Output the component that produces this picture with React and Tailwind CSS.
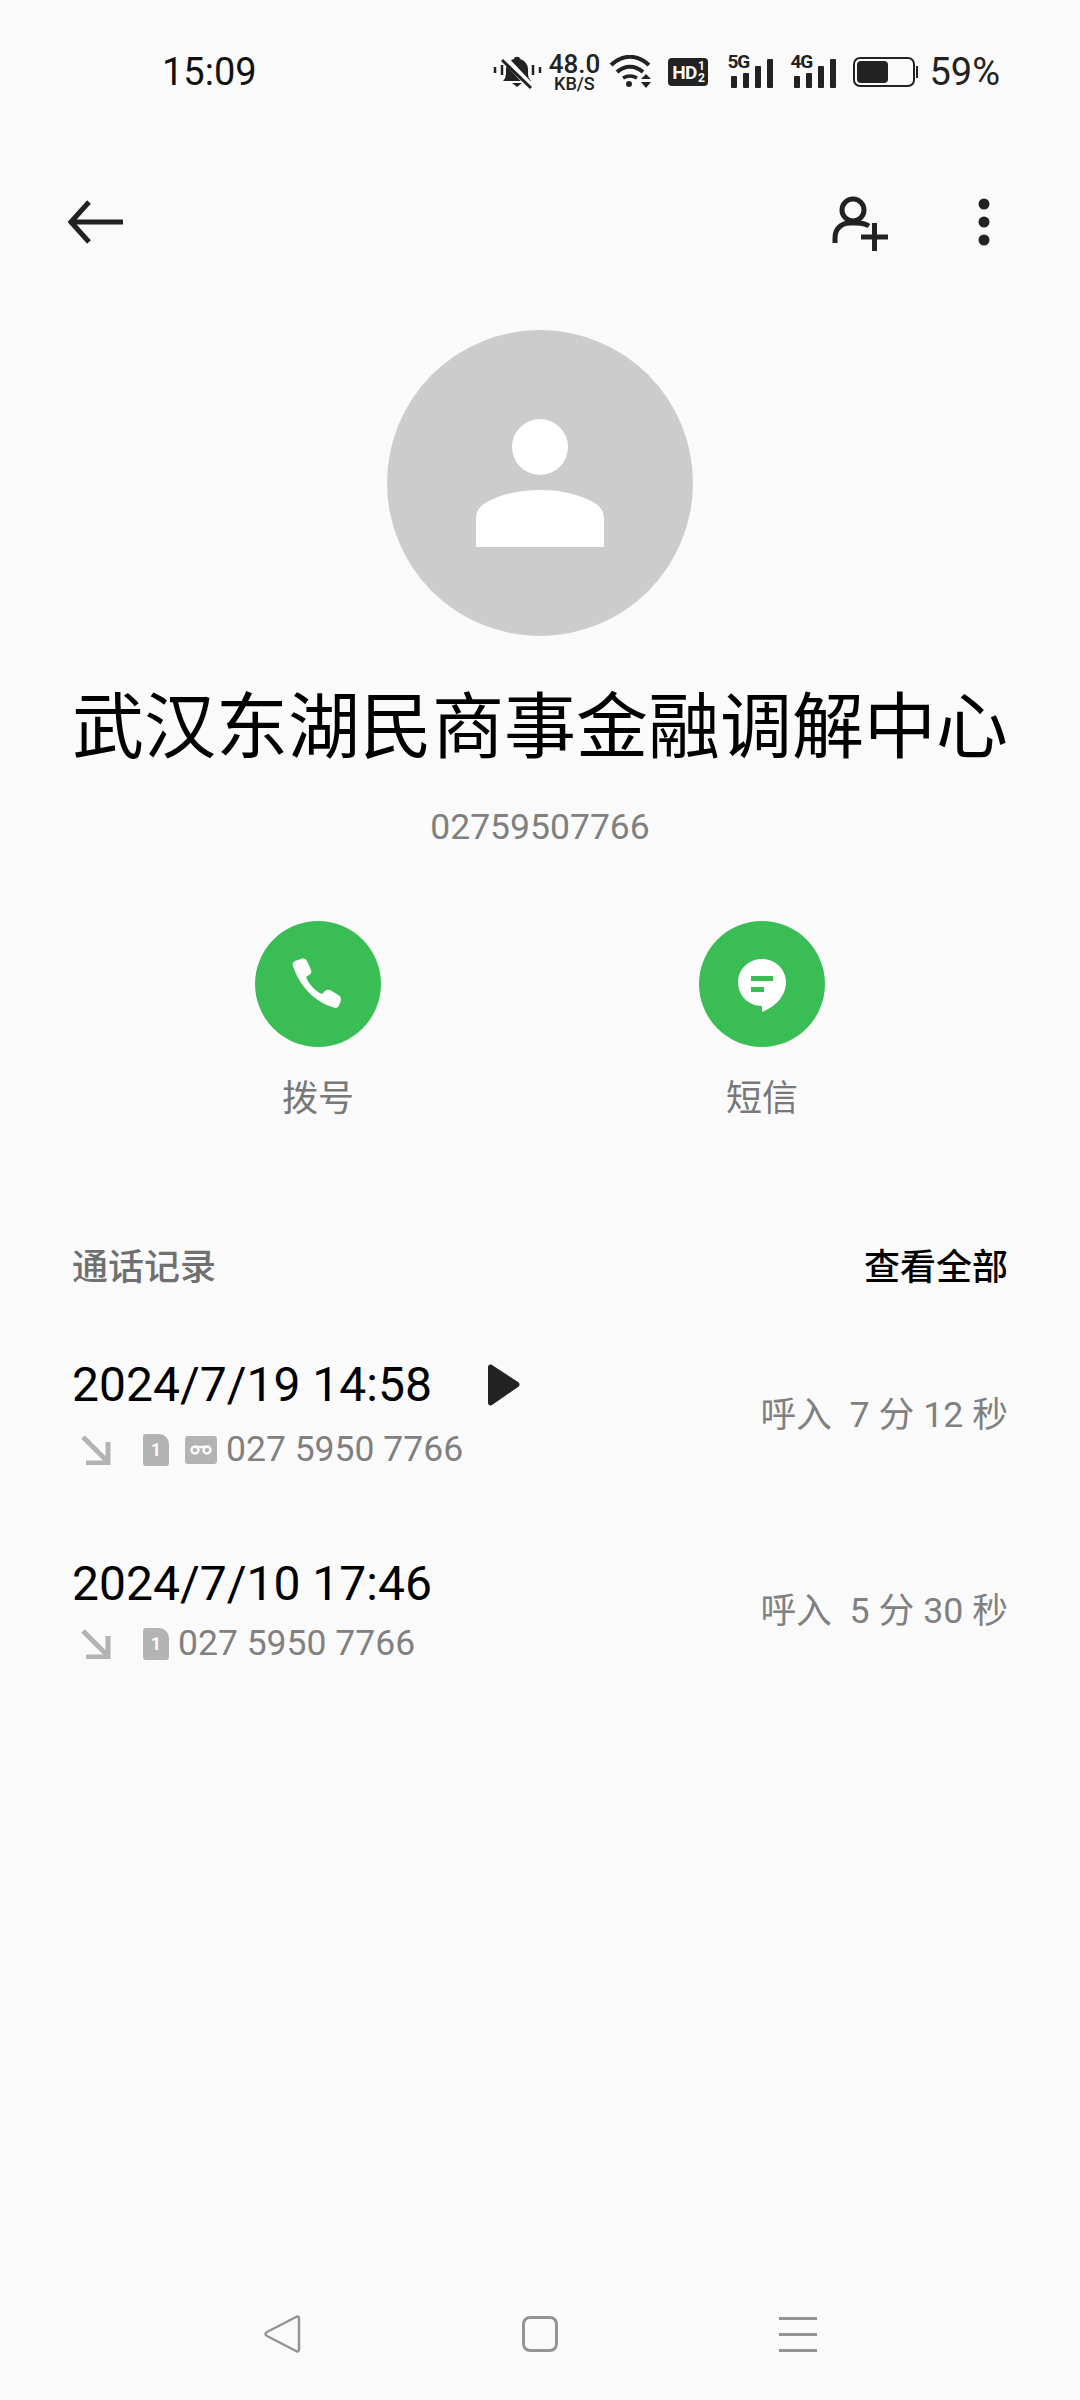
import React from "react";

function StatusIcons() {
  return (
    <div className="flex items-center text-[#222]">
      {/* muted bell */}
      <svg width="50" height="36" viewBox="0 0 50 36">
        <path d="M11 27c3-3 3-6 3-12 0-5 4-9 8-10 0-3 6-3 6 0 4 1 8 5 8 10 0 6 0 9 3 12z" fill="#222" />
        <path d="M20 29h10l-5 4z" fill="#222" />
        <path d="M12 4l28 30" stroke="#fafafa" strokeWidth="7" />
        <path d="M10 6l29 28" stroke="#222" strokeWidth="3" />
        <path d="M3 13v6M10 11v10M41 11v10M48 13v6" stroke="#222" strokeWidth="2.500" />
      </svg>
      <div className="ml-[7px] flex flex-col items-center w-[50px] font-medium leading-none">
        <span className="text-[26px] leading-[20px]">48.0</span>
        <span className="text-[18px] leading-[13px] mt-[3px]">KB/S</span>
      </div>
      {/* wifi */}
      <svg width="44" height="34" viewBox="0 0 44 34" className="ml-[10px]">
        <path d="M2 10c12-11 26-11 38 0" stroke="#222" strokeWidth="4" fill="none" />
        <path d="M8 17c8-7 18-7 26 0" stroke="#222" strokeWidth="4" fill="none" />
        <path d="M14 23c5-3 9-3 14 0" stroke="#222" strokeWidth="3.500" fill="none" />
        <circle cx="20" cy="29" r="3" fill="#222" />
        <path d="M32 24h10l-5-5zM32 27h10l-5 6z" fill="#222" />
      </svg>
      <div className="ml-[15px] w-[40px] h-[28px] rounded-[4px] bg-[#222] text-[#fafafa] flex items-center justify-center gap-[1px] font-bold">
        <span className="text-[19px] leading-none tracking-[-0.5px]">HD</span>
        <span className="flex flex-col text-[12px] leading-[12px]">
          <span>1</span>
          <span>2</span>
        </span>
      </div>
      <Signal label="5G" className="ml-[19px]" />
      <Signal label="4G" className="ml-[17px]" />
      {/* battery */}
      <div className="ml-[17px] flex items-center">
        <div className="w-[62px] h-[30px] rounded-[7px] border-2 border-[#222] p-[2px]">
          <div className="w-[31px] h-full rounded-[4px] bg-[#222]" />
        </div>
        <div className="ml-[1px] w-[2px] h-[12px] bg-[#222]" />
      </div>
      <span className="ml-[11px] text-[38px] leading-none">59%</span>
    </div>
  );
}

function Signal({ label, className }) {
  return (
    <div className={`relative w-[46px] h-[32px] ${className}`}>
      <span className="absolute left-0 top-[-2px] text-[19px] leading-[16px] font-bold tracking-[-1px]">{label}</span>
      <div className="absolute inset-0 flex items-end justify-end gap-[6px]">
        <div className="w-[6px] h-[12px] rounded-[1px] bg-[#222]" />
        <div className="w-[6px] h-[15px] rounded-[1px] bg-[#222]" />
        <div className="w-[6px] h-[22px] rounded-[1px] bg-[#222]" />
        <div className="w-[6px] h-[29px] rounded-[1px] bg-[#222]" />
      </div>
    </div>
  );
}

function SimIcon() {
  return (
    <div className="w-[26px] h-[32px] bg-[#b3b3b3] rounded-[3px] rounded-tr-[10px] flex items-center justify-center text-[#fafafa] text-[18px] font-bold leading-none">
      1
    </div>
  );
}

function Incoming() {
  return (
    <svg width="30" height="30" viewBox="0 0 30 30">
      <path d="M2 2l24 24" stroke="#b3b3b3" strokeWidth="5" />
      <path d="M27 7v21H5" stroke="#b3b3b3" strokeWidth="5" fill="none" />
    </svg>
  );
}

function CallRow({ date, detail, voicemail, children }) {
  return (
    <div className="flex items-center justify-between h-[196px]">
      <div className="mb-[7px]">
        <div className="flex items-center h-[60px]">
          <span className="text-[48px] leading-none text-black">{date}</span>
          {voicemail && (
            <svg width="34" height="42" viewBox="0 0 34 42" className="ml-[54px]">
              <path d="M2 3c0-2 2-3 4-2l26 17c2 1.500 2 4 0 5L6 41c-2 1-4 0-4-2z" fill="#222" />
            </svg>
          )}
        </div>
        <div className={`flex items-center h-[40px] ml-[9px] ${voicemail ? "mt-[15px]" : "mt-[10px]"}`}>
          <Incoming />
          <div className="ml-[32px]">
            <SimIcon />
          </div>
          {voicemail && (
            <div className="ml-[16px] w-[32px] h-[28px] bg-[#b3b3b3] rounded-[3px] flex items-center justify-center">
              <svg width="24" height="12" viewBox="0 0 24 12">
                <circle cx="6" cy="6" r="3.500" stroke="#fafafa" strokeWidth="2.500" fill="none" />
                <circle cx="18" cy="6" r="3.500" stroke="#fafafa" strokeWidth="2.500" fill="none" />
                <path d="M6 3h12" stroke="#fafafa" strokeWidth="2.500" />
              </svg>
            </div>
          )}
          <span className="ml-[9px] text-[35.5px] leading-none text-[#808080]">{detail}</span>
        </div>
      </div>
      <span className="text-[35.75px] leading-none text-[#808080]">{children}</span>
    </div>
  );
}

export default function App() {
  return (
    <div className="w-[1080px] h-[2400px] bg-[#fafafa] flex flex-col overflow-hidden font-['Roboto','Noto_Sans_CJK_SC',sans-serif]">
      {/* status bar */}
      <div className="h-[144px] shrink-0 flex items-center justify-between pl-[162px] pr-[80px]">
        <span className="text-[38px] leading-none text-[#111]">15:09</span>
        <StatusIcons />
      </div>

      {/* toolbar */}
      <div className="h-[156px] shrink-0 flex items-center justify-between pl-[68px] pr-[90px]">
        <svg width="56" height="46" viewBox="0 0 56 46">
          <path d="M21 3L3 23l18 20M3 23h52" stroke="#222" strokeWidth="5" fill="none" />
        </svg>
        <div className="flex items-center gap-[90px] mt-[3px]">
          <svg width="58" height="56" viewBox="0 0 58 56">
            <circle cx="23" cy="14" r="11" stroke="#222" strokeWidth="5" fill="none" />
            <path d="M5 47V42c0-9 6-15 15-15h6c6 0 10 1 13 3" stroke="#222" strokeWidth="5" fill="none" />
            <path d="M31 41h27M44.500 27v28" stroke="#222" strokeWidth="5" />
          </svg>
          <svg width="12" height="48" viewBox="0 0 12 48" className="mb-[3px]">
            <circle cx="6" cy="6" r="5.500" fill="#222" />
            <circle cx="6" cy="24" r="5.500" fill="#222" />
            <circle cx="6" cy="42" r="5.500" fill="#222" />
          </svg>
        </div>
      </div>

      {/* avatar + name */}
      <div className="flex flex-col items-center mt-[30px]">
        <div className="w-[306px] h-[306px] rounded-full bg-[#cccccc] flex items-center justify-center">
          <svg width="128" height="128" viewBox="0 0 128 128">
            <circle cx="64" cy="28" r="28" fill="#fff" />
            <path d="M0 128V100c0-10 6-15 15-19 15-7 31-10 49-10s34 3 49 10c9 4 15 9 15 19v28z" fill="#fff" />
          </svg>
        </div>
        <div className="mt-[52px] text-[72px] leading-[80px] text-black whitespace-nowrap">武汉东湖民商事金融调解中心</div>
        <div className="mt-[38px] text-[35.5px] leading-[42px] text-[#808080]">02759507766</div>
      </div>

      {/* actions */}
      <div className="mt-[73px] flex justify-center gap-[318px]">
        <div className="flex flex-col items-center w-[126px]">
          <div className="w-[126px] h-[126px] rounded-full bg-[#3bbd56] flex items-center justify-center">
            <svg width="52" height="52" viewBox="0 0 52 52">
              <path d="M9 1c3-1 5 0 6 2l4 9c1 2 0 4-2 5l-3 2c2 6 9 14 16 17l3-3c2-1.500 4-1.500 6-.5l8 5c2 1.500 2.500 3.500 1.500 6l-1.500 4c-1 2-3 3-5 2C22 44 7 27 1 8c-1-2 0-4 2-5z" fill="#fff" />
            </svg>
          </div>
          <span className="mt-[31px] text-[36px] leading-[42px] text-[#787878] whitespace-nowrap">拨号</span>
        </div>
        <div className="flex flex-col items-center w-[126px]">
          <div className="w-[126px] h-[126px] rounded-full bg-[#3bbd56] flex items-center justify-center">
            <svg width="48" height="54" viewBox="0 0 48 54" className="mt-[4px]">
              <path d="M24 0c13 0 24 10 24 23 0 14-11 25-24 30v-6C10 47 0 36 0 23 0 10 11 0 24 0z" fill="#fff" />
              <path d="M13 17h22v5H13zM13 28h13v5H13z" fill="#3bbd56" />
            </svg>
          </div>
          <span className="mt-[31px] text-[36px] leading-[42px] text-[#787878] whitespace-nowrap">短信</span>
        </div>
      </div>

      {/* call log */}
      <div className="mt-[127px] px-[72px]">
        <div className="flex items-center justify-between h-[42px]">
          <span className="text-[36px] leading-none font-medium text-[#707070]">通话记录</span>
          <span className="text-[36px] leading-none font-medium text-black">查看全部</span>
        </div>
        <div className="mt-[29px]">
          <CallRow date="2024/7/19 14:58" detail="027 5950 7766" voicemail>呼入&nbsp; 7 分 12 秒</CallRow>
          <CallRow date="2024/7/10 17:46" detail="027 5950 7766">呼入&nbsp; 5 分 30 秒</CallRow>
        </div>
      </div>

      {/* nav bar */}
      <div className="mt-auto mb-[30px] h-[72px] flex items-center justify-center gap-[221px]">
        <svg width="38" height="38" viewBox="0 0 38 38">
          <path d="M33 2c1.500-1 3-.5 3 2v30c0 2.500-1.500 3-3 2L4 21c-2-1-2-3 0-4z" stroke="#949494" strokeWidth="2.500" fill="none" />
        </svg>
        <div className="w-[36px] h-[36px] rounded-[8px] border-[3px] border-[#949494]" />
        <div className="flex flex-col gap-[13px]">
          <div className="w-[38px] h-[3px] bg-[#949494]" />
          <div className="w-[38px] h-[3px] bg-[#949494]" />
          <div className="w-[38px] h-[3px] bg-[#949494]" />
        </div>
      </div>
    </div>
  );
}
